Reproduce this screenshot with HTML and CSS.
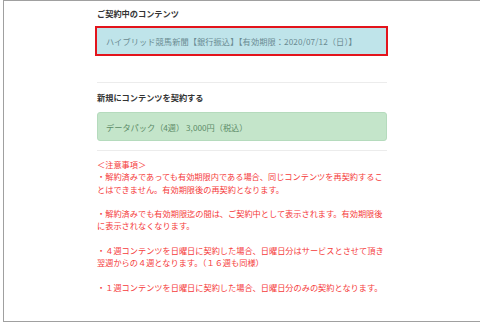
FILE: index.html
```html
<!DOCTYPE html>
<html lang="ja">
<head>
  <meta charset="UTF-8" />
  <title>契約コンテンツ</title>
  <link rel="stylesheet" href="styles.css">
</head>
<body>

  <div class="frame">
    <div class="column">

      <!-- 契約中 -->
      <h3 class="title">ご契約中のコンテンツ</h3>
      <div class="current">ハイブリッド競馬新聞【銀行振込】【有効期限：2020/07/12（日）】</div>

      <div class="sep first"></div>

      <!-- 新規契約 -->
      <h3 class="title second">新規にコンテンツを契約する</h3>
      <div class="pack">データパック（4週） 3,000円（税込）</div>

      <div class="sep"></div>

      <!-- 注意事項 -->
      <p class="notes">
        ＜注意事項＞<br>
        ・解約済みであっても有効期限内である場合、同じコンテンツを再契約することはできません。有効期限後の再契約となります。<br>
        <br>
        ・解約済みでも有効期限迄の間は、ご契約中として表示されます。有効期限後に表示されなくなります。<br>
        <br>
        ・４週コンテンツを日曜日に契約した場合、日曜日分はサービスとさせて頂き翌週からの４週となります。（１６週も同様）<br>
        <br>
        ・１週コンテンツを日曜日に契約した場合、日曜日分のみの契約となります。
      </p>

    </div>
  </div>

</body>
</html>
```

FILE: styles.css
```css
html, body { margin: 0; height: 100%; overflow: hidden; background: #fff; }
body { font-family: "Noto Sans CJK JP", "Noto Sans", sans-serif; font-size: 8.2px; line-height: 12px; color: #333; }
.frame { margin-left: 3px; height: 322px; border: 1px solid #a0a0a0; border-right: 0; box-sizing: border-box; }
.column { width: 290px; margin-left: 93px; }
.title { margin: 6px 0 0; font-size: 8.2px; font-weight: bold; line-height: 12px; color: #333; }
.title.second { margin-top: 8px; }
.current { margin: 7px -1px 0 -2px; padding: 7px 9px; border: 2px solid #e3141c; background: #bfe4ea; color: #6a8b92; letter-spacing: 0.1px; }
.sep { height: 1px; background: #ececec; margin-top: 9px; }
.sep.first { margin-top: 26px; }
.pack { margin-top: 9px; padding: 7.5px 8px; border: 1px solid #b5dbbd; border-radius: 3px; background: #c4e5ca; color: #5c8b67; }
.notes { margin: 7px 0 0; color: #f53b3b; line-height: 12.3px; }
```
